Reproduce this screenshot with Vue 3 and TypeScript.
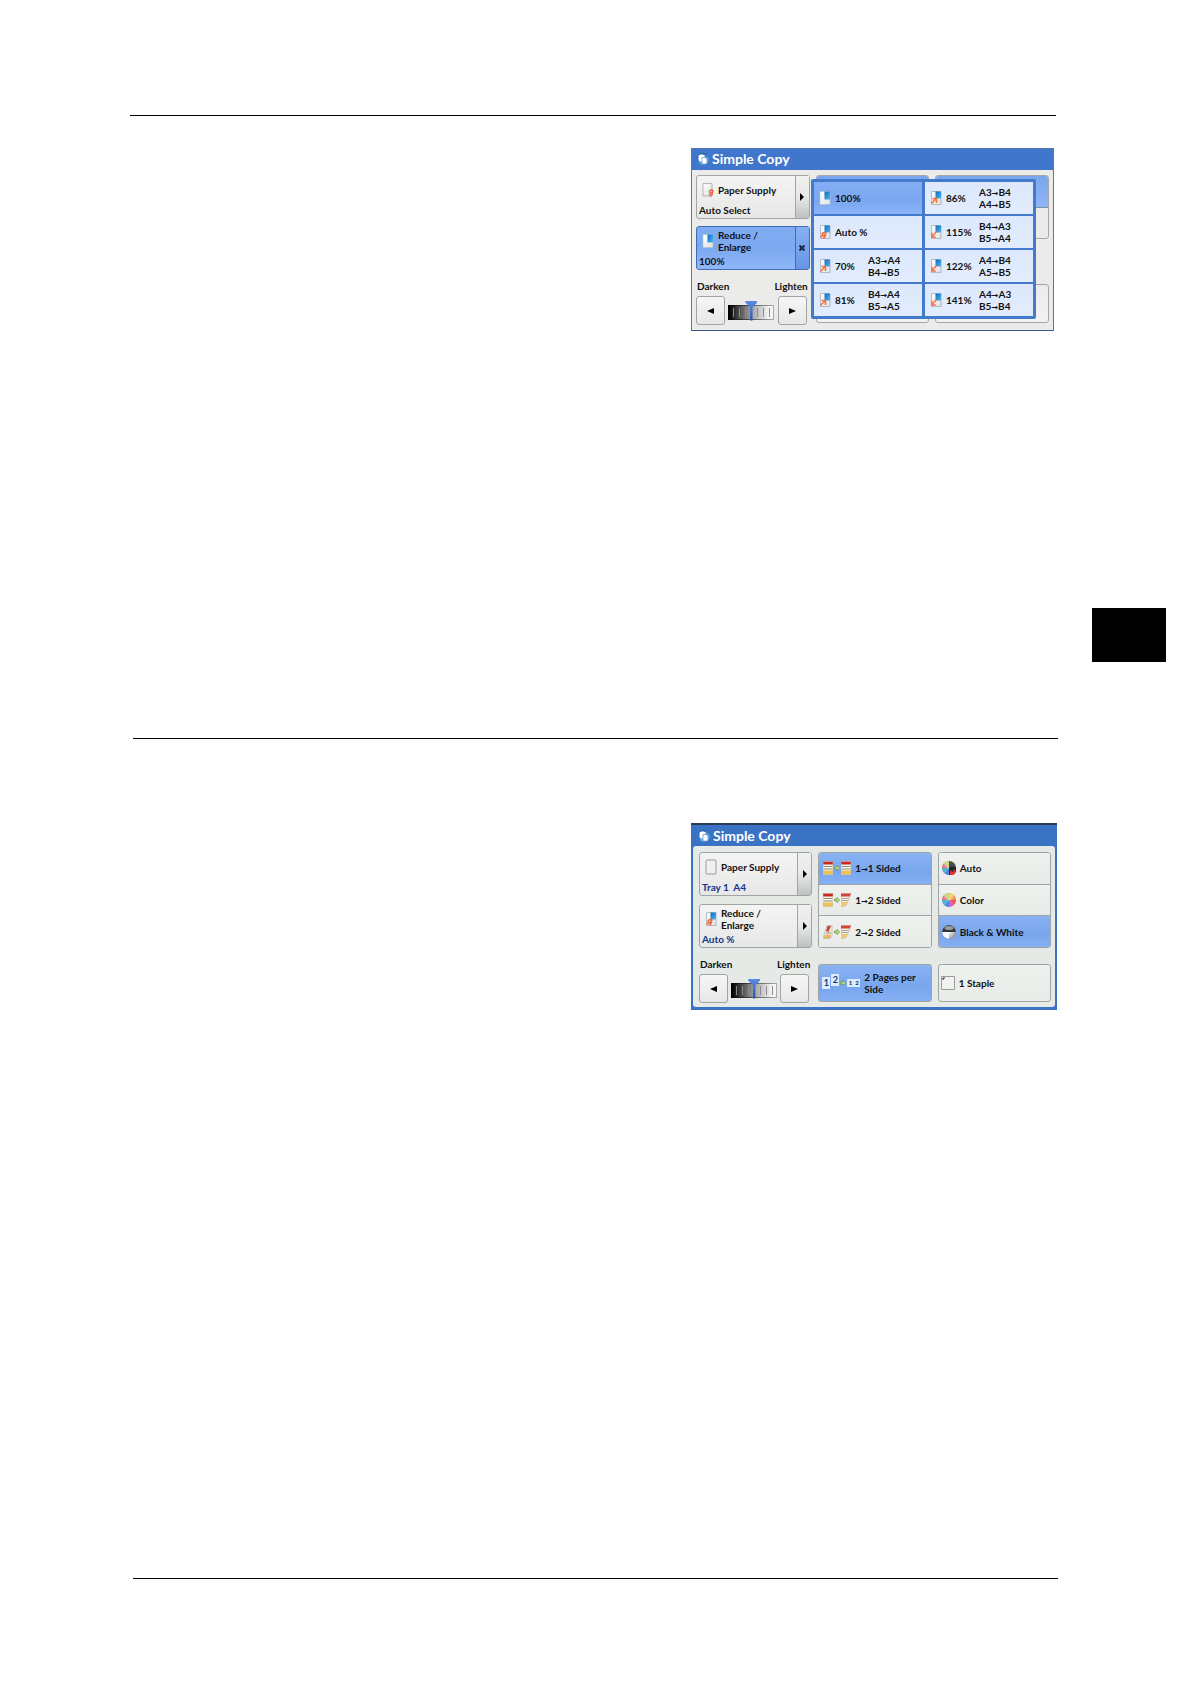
<script setup lang="ts">
import { ref } from 'vue'

interface Ratio {
  label: string
  icon: string
  pairs: [string, string][]
}

const ratios: Ratio[] = [
  { label: '100%', icon: 'full', pairs: [] },
  { label: 'Auto %', icon: 'fit', pairs: [] },
  { label: '70%', icon: 'reduce', pairs: [['A3', 'A4'], ['B4', 'B5']] },
  { label: '81%', icon: 'reduce', pairs: [['B4', 'A4'], ['B5', 'A5']] },
  { label: '86%', icon: 'reduce', pairs: [['A3', 'B4'], ['A4', 'B5']] },
  { label: '115%', icon: 'enlarge', pairs: [['B4', 'A3'], ['B5', 'A4']] },
  { label: '122%', icon: 'enlarge', pairs: [['A4', 'B4'], ['A5', 'B5']] },
  { label: '141%', icon: 'enlarge', pairs: [['A4', 'A3'], ['B5', 'B4']] },
]

const sides = [
  { from: '1', to: '1 Sided', left: 'sheet', right: 'sheet' },
  { from: '1', to: '2 Sided', left: 'sheet', right: 'turned' },
  { from: '2', to: '2 Sided', left: 'flipped', right: 'turned' },
]

const colors = [
  { label: 'Auto', icon: 'wheel-auto' },
  { label: 'Color', icon: 'wheel' },
  { label: 'Black & White', icon: 'mono' },
]

const ratio = ref('100%')
const side = ref(0)
const color = ref('Black & White')
const densityA = ref(50)
const densityB = ref(50)
</script>

<template>
  <main class="page">
    <svg class="defs" width="0" height="0" aria-hidden="true">
      <defs>
        <linearGradient id="blue" x1="0" y1="0" x2="1" y2="1">
          <stop offset="0" stop-color="#0a6cc0" />
          <stop offset="1" stop-color="#4fb4f0" />
        </linearGradient>
        <linearGradient id="paper" x1="0" y1="0" x2="1" y2="1">
          <stop offset="0" stop-color="#ffffff" />
          <stop offset="1" stop-color="#dfe0e0" />
        </linearGradient>
        <radialGradient id="globe" cx="0.6" cy="0.7" r="0.7">
          <stop offset="0" stop-color="#a4dcf8" />
          <stop offset="0.5" stop-color="#5ca8e0" />
          <stop offset="1" stop-color="#1c5298" />
        </radialGradient>
        <linearGradient id="gray" x1="0" y1="0" x2="1" y2="1">
          <stop offset="0" stop-color="#f4f4f4" />
          <stop offset="1" stop-color="#777" />
        </linearGradient>
        <symbol id="logo" viewBox="0 0 12 12">
          <circle cx="6" cy="6" r="6" fill="url(#globe)" />
          <path d="M1.500 2.500 4 1.200 7.500 2v6.500H3L1.500 7z" fill="#fff" />
          <path d="M5 4.500h3.500L10 6v5H5z" fill="#fff" stroke="#3a7cc4" stroke-width=".6" />
        </symbol>
        <symbol id="query" viewBox="0 0 12 16">
          <path d="M1 1.500h8q1 0 1 1V14H1z" fill="url(#paper)" stroke="#a4a4a4" stroke-width=".8" />
          <path d="M7.500 9q2-1.800 3.500-.5Q11 10.500 8.500 11q-1.500-.4-1-2M10.800 8.500Q11 12 8.500 14.800M6.500 13l2-.8" fill="none" stroke="#e8603c" stroke-width="1.300" />
        </symbol>
        <symbol id="blank" viewBox="0 0 12 16">
          <rect x="1" y="1" width="10" height="14" rx="1" fill="#eef0ee" stroke="#9a9c9a" />
        </symbol>
        <symbol id="full" viewBox="0 0 12 16">
          <path d="M1 1.500h10v13H1z" fill="url(#paper)" stroke="#b4bcc8" stroke-width=".5" />
          <path d="M5.500 1.500H11v8H5.500z" fill="url(#blue)" />
        </symbol>
        <symbol id="fit" viewBox="0 0 12 16">
          <path d="M1.500 1.500h9.500v13H1.500z" fill="url(#paper)" stroke="#8f98a4" stroke-width=".6" />
          <path d="M5.500 1.500H11v7H5.500z" fill="url(#blue)" />
          <path d="M1.500 13.500 4 11.500M3 11q0-2.500 2.500-2.500T6 11q-2 1-3 0M6.500 8Q7 12 4.500 14.500" fill="none" stroke="#f06a3a" stroke-width="1.500" />
        </symbol>
        <symbol id="reduce" viewBox="0 0 12 16">
          <path d="M1.500 1.500h9.500v13H1.500z" fill="url(#paper)" stroke="#8f98a4" stroke-width=".6" />
          <path d="M5.500 1.500H11v7H5.500z" fill="url(#blue)" />
          <path d="M1.500 13.500 6 8.800M2.500 8.500h4v4.500" fill="none" stroke="#f4703e" stroke-width="1.500" />
        </symbol>
        <symbol id="enlarge" viewBox="0 0 12 16">
          <path d="M1.500 1.500h9.500v13H1.500z" fill="url(#paper)" stroke="#8f98a4" stroke-width=".6" />
          <path d="M5.500 1.500H11v7H5.500z" fill="url(#blue)" />
          <path d="M6.500 7.500 2 12.500M1.800 8.500V13h4" fill="none" stroke="#f4703e" stroke-width="1.400" />
        </symbol>
        <symbol id="sheet" viewBox="0 0 10 14">
          <path d="M0 0h10v14H0z" fill="#faf7ec" />
          <path d="M0 .5h10v3H0z" fill="#c82a22" />
          <path d="M1 5.500h8M1 8h8" stroke="#8c8c80" stroke-width="1" />
          <path d="M.5 9.500h9v4h-9z" fill="#f0c050" />
          <path d="M.3.3h9.400v13.400H.3z" fill="none" stroke="#a89c90" stroke-width=".5" />
        </symbol>
        <symbol id="turned" viewBox="0 0 10 14">
          <path d="M0 0h10L5.500 12 1 14z" fill="#f6f0dc" stroke="#a09888" stroke-width=".5" />
          <path d="M0 .5h9.800l-1 3H0z" fill="#d0443a" />
          <path d="M1 5.500h6.500M1 7.500h5.500" stroke="#908c80" stroke-width=".8" />
          <path d="M1 9h5.200l-1.400 3.500L1 13.500z" fill="#f0c870" />
        </symbol>
        <symbol id="flipped" viewBox="0 0 10 14">
          <path d="M4 .5h5v10l-2 3H0z" fill="#f4efe2" stroke="#a09888" stroke-width=".5" />
          <path d="M4.500 1h3.500L5.500 7 3 6z" fill="#d0443a" />
          <path d="M3 8h5" stroke="#85827a" stroke-width=".9" />
          <path d="M2 9.800h6.500l-2 3.500H.5z" fill="#e8b860" />
        </symbol>
        <symbol id="step" viewBox="0 0 6 6">
          <path d="M.5 2H3V.5L5.700 3 3 5.500V4H.5z" fill="#c4e08a" stroke="#6c9c3c" stroke-width=".8" />
        </symbol>
        <symbol id="wheel" viewBox="0 0 14 14">
          <path d="M7 7V0a7 7 0 0 1 5 2z" fill="#f4c02c" />
          <path d="M7 7 12 2a7 7 0 0 1 2 5z" fill="#f08838" />
          <path d="M7 7h7a7 7 0 0 1-2 5z" fill="#e85858" />
          <path d="M7 7l5 5a7 7 0 0 1-5 2z" fill="#d860b8" />
          <path d="M7 7v7a7 7 0 0 1-5-2z" fill="#5a80e0" />
          <path d="M7 7l-5 5a7 7 0 0 1-2-5z" fill="#48b8d0" />
          <path d="M7 7H0a7 7 0 0 1 2-5z" fill="#e86474" />
          <path d="M7 7 2 2a7 7 0 0 1 5-2z" fill="#a8cc48" />
          <ellipse cx="7" cy="4" rx="5.500" ry="3.500" fill="#fff" opacity=".3" />
        </symbol>
        <symbol id="wheel-auto" viewBox="0 0 14 14">
          <use href="#wheel" width="14" height="14" />
          <path d="M7 0a7 7 0 0 1 7 7l-.6 3-6.400-3z" fill="#4a4a4c" />
          <path d="M7 6h7v5q-3 3.500-7 3z" fill="#222" />
          <path d="M8 13.500q-1-2.500 1.500-4.500 0 2 1 2 1.500-.5 1-3.500 3 2.500 1.500 5-2 2.500-5 1" fill="#e03838" />
        </symbol>
        <symbol id="mono" viewBox="0 0 14 14">
          <circle cx="7" cy="7" r="6.800" fill="#606468" />
          <path d="M7 7h6.800A6.800 6.800 0 0 1 7 13.800z" fill="url(#gray)" />
          <path d="M7 7H.2A6.800 6.800 0 0 0 7 13.800z" fill="#fbfbfb" />
          <path d="M.2 7A6.800 6.800 0 0 1 13.800 7z" fill="#34373a" />
          <ellipse cx="7" cy="3" rx="4.500" ry="2" fill="#fff" opacity=".5" />
        </symbol>
        <symbol id="staple" viewBox="0 0 14 14">
          <path d="M.5.5h13v13H.5z" fill="#f1f3f0" stroke="#9a9c9a" />
          <path d="M1.500 3.500l2-2" stroke="#333" stroke-width="1.200" />
        </symbol>
      </defs>
    </svg>

    <hr class="rule top" />

    <section class="panel first" aria-label="Simple Copy, Reduce / Enlarge list open">
      <header class="title">
        <svg class="logo"><use href="#logo" /></svg>
        <h2>Simple Copy</h2>
      </header>
      <div class="body">
        <div class="column">
          <div class="split">
            <button class="main">
              <span class="head"><svg class="i"><use href="#query" /></svg><span>Paper Supply</span></span>
              <span class="value">Auto Select</span>
            </button>
            <button class="more" aria-label="Paper Supply options"><svg class="caret" viewBox="0 0 4 8"><path d="M0 0l4 4-4 4z" /></svg></button>
          </div>
          <div class="split on">
            <button class="main">
              <span class="head"><svg class="i"><use href="#full" /></svg><span>Reduce /<br />Enlarge</span></span>
              <span class="value">{{ ratio }}</span>
            </button>
            <button class="more" aria-label="Close Reduce / Enlarge"><svg class="cross" viewBox="0 0 6 6"><path d="M.5.5l5 5M5.500.5l-5 5" /></svg></button>
          </div>
          <div class="density">
            <div class="ends"><label for="density-a">Darken</label><span>Lighten</span></div>
            <div class="control">
              <button class="nudge" aria-label="Darker"><svg viewBox="0 0 7 6"><path d="M7 0v6L0 3z" /></svg></button>
              <input id="density-a" v-model.number="densityA" type="range" />
              <button class="nudge" aria-label="Lighter"><svg viewBox="0 0 7 6"><path d="M0 0v6l7-3z" /></svg></button>
            </div>
          </div>
        </div>
        <div class="column">
          <div class="slot"><i class="lit"></i><i></i></div>
          <div class="slot low"></div>
        </div>
        <div class="column">
          <div class="slot short"><i class="lit"></i><i></i></div>
          <div class="slot low"></div>
        </div>

        <div class="popup">
          <button
            v-for="r in ratios"
            :key="r.label"
            :class="{ on: r.label === ratio }"
            @click="ratio = r.label"
          >
            <svg class="i"><use :href="'#' + r.icon" /></svg>
            <span class="percent">{{ r.label }}</span>
            <span v-if="r.pairs.length" class="pairs">
              <span v-for="p in r.pairs" :key="p[0]">{{ p[0] }}<span class="to">→</span>{{ p[1] }}</span>
            </span>
          </button>
        </div>
      </div>
    </section>

    <div class="tab"></div>

    <hr class="rule" />

    <section class="panel second" aria-label="Simple Copy">
      <header class="title">
        <svg class="logo"><use href="#logo" /></svg>
        <h2>Simple Copy</h2>
      </header>
      <div class="body">
        <div class="column">
          <div class="split">
            <button class="main">
              <span class="head"><svg class="i"><use href="#blank" /></svg><span>Paper Supply</span></span>
              <span class="value">Tray 1&nbsp; A4</span>
            </button>
            <button class="more" aria-label="Paper Supply options"><svg class="caret" viewBox="0 0 4 8"><path d="M0 0l4 4-4 4z" /></svg></button>
          </div>
          <div class="split">
            <button class="main">
              <span class="head"><svg class="i"><use href="#fit" /></svg><span>Reduce /<br />Enlarge</span></span>
              <span class="value">Auto %</span>
            </button>
            <button class="more" aria-label="Reduce / Enlarge options"><svg class="caret" viewBox="0 0 4 8"><path d="M0 0l4 4-4 4z" /></svg></button>
          </div>
          <div class="density">
            <div class="ends"><label for="density-b">Darken</label><span>Lighten</span></div>
            <div class="control">
              <button class="nudge" aria-label="Darker"><svg viewBox="0 0 7 6"><path d="M7 0v6L0 3z" /></svg></button>
              <input id="density-b" v-model.number="densityB" type="range" />
              <button class="nudge" aria-label="Lighter"><svg viewBox="0 0 7 6"><path d="M0 0v6l7-3z" /></svg></button>
            </div>
          </div>
        </div>

        <div class="column">
          <div class="group">
            <button v-for="(s, n) in sides" :key="n" :class="{ on: n === side }" @click="side = n">
              <span class="flow">
                <svg class="doc"><use :href="'#' + s.left" /></svg>
                <svg class="step"><use href="#step" /></svg>
                <svg class="doc"><use :href="'#' + s.right" /></svg>
              </span>
              <span>{{ s.from }}<span class="to">→</span>{{ s.to }}</span>
            </button>
          </div>
          <button class="low on">
            <span class="nup">
              <span class="leaf">1</span><span class="leaf raised">2</span>
              <svg class="step"><use href="#step" /></svg>
              <span class="spread"><b>1</b><b>2</b></span>
            </span>
            <span>2 Pages per<br />Side</span>
          </button>
        </div>

        <div class="column">
          <div class="group">
            <button
              v-for="c in colors"
              :key="c.label"
              :class="{ on: c.label === color }"
              @click="color = c.label"
            >
              <svg class="round"><use :href="'#' + c.icon" /></svg>
              <span>{{ c.label }}</span>
            </button>
          </div>
          <button class="low">
            <svg class="round"><use href="#staple" /></svg>
            <span>1 Staple</span>
          </button>
        </div>
      </div>
    </section>

    <hr class="rule foot" />
  </main>
</template>

<style>
body {
  margin: 0;
  background: #fff;
}
</style>

<style scoped>
* {
  box-sizing: border-box;
}
.page {
  display: flex;
  flex-direction: column;
  padding: 115px 24px 105px 133px;
  font: bold 10px/12px Lato, "Noto Sans", sans-serif;
  color: #111;
}
.defs {
  position: absolute;
}
svg {
  display: block;
  flex: none;
}
.rule {
  align-self: stretch;
  height: 1px;
  margin: 0 108px 0 0;
  border: 0;
  background: #000;
}
.rule.top {
  margin: 0 110px 0 -3px;
}
.rule.foot {
  margin-top: 568px;
}
.tab {
  align-self: flex-end;
  width: 74px;
  height: 54px;
  margin: 277px 0 76px;
  background: #000;
}
.panel {
  align-self: flex-end;
  background: #4076cc;
}
.first {
  width: 363px;
  margin: 32px 112px 0 0;
  border: 1px solid #5577a8;
  border-bottom-color: #3c5a8c;
}
.second {
  width: 366px;
  margin: 84px 109px 0 0;
  padding: 0 2px 3px;
  border-top: 2px solid #2c3a58;
  background: #3b73c4;
}
.title {
  display: flex;
  align-items: center;
  gap: 3px;
  height: 21px;
  padding: 0 5px 2px;
  color: #fff;
}
.second .title {
  padding-bottom: 0;
}
.logo {
  width: 12px;
  height: 12px;
}
.title h2 {
  margin: 0;
  font-size: 14px;
  line-height: 18px;
}
.body {
  position: relative;
  display: grid;
  grid-template-columns: repeat(3, 1fr);
  gap: 6px;
  padding: 5px 4px;
  background: #ebebe9;
}
.second .body {
  padding: 6px 4px 4px 6px;
  border-radius: 3px;
  background: #e6eae6;
}
.column {
  display: flex;
  flex-direction: column;
  min-width: 0;
}
button {
  margin: 0;
  padding: 0;
  border: 0;
  background: none;
  color: inherit;
  font: inherit;
  text-align: left;
}
.split {
  display: flex;
  height: 44px;
  margin-bottom: 7px;
  border: 1px solid #a2a4a4;
  border-radius: 3px;
  background: linear-gradient(#f4f4f3, #e6e7e6);
}
.second .split {
  margin-bottom: 8px;
}
.main {
  flex: 1;
  display: flex;
  flex-direction: column;
}
.head {
  display: flex;
  align-items: center;
  gap: 4px;
  height: 28px;
  padding-left: 5px;
}
.i {
  width: 12px;
  height: 16px;
}
.value {
  padding-left: 2px;
}
.second .value {
  color: #14348c;
}
.more {
  display: flex;
  align-items: center;
  justify-content: center;
  width: 14px;
  border-left: 1px solid #a2a4a4;
  background: linear-gradient(#f0f0ef, #e8e8e8 50%, #bfc1c1);
}
.caret {
  width: 4px;
  height: 8px;
}
.cross {
  width: 6px;
  height: 6px;
  fill: none;
  stroke: #16284c;
  stroke-width: 2;
}
.on {
  background: linear-gradient(#7fabf2, #7ba8f0 50%, #8fb7f8);
}
.split.on {
  border-color: #3f6cb8;
}
.on .more {
  border-color: #3f6cb8;
  background: linear-gradient(#86b0f4, #6695e4);
}
.density {
  display: flex;
  flex-direction: column;
  gap: 4px;
}
.ends {
  display: flex;
  justify-content: space-between;
  padding: 3px 2px 0 1px;
}
.second .ends {
  padding-top: 2px;
}
.control {
  display: flex;
  align-items: center;
  justify-content: space-between;
  padding-right: 3px;
}
.nudge {
  display: flex;
  align-items: center;
  justify-content: center;
  width: 29px;
  height: 29px;
  border: 1px solid #a2a4a4;
  border-radius: 3px;
  background: linear-gradient(#f6f6f5, #e6e7e6);
}
.nudge svg {
  width: 7px;
  height: 6px;
}
input[type="range"] {
  appearance: none;
  width: 46px;
  height: 24px;
  margin: 0;
  background:
    repeating-linear-gradient(90deg, transparent 0 5px, #8c8c8c 5px 6px) 0 9px / 42px 9px no-repeat,
    linear-gradient(90deg, #000, #333 15%, #a0a0a0 50%, #f4f4f4 90%) 1px 7px / 44px 13px no-repeat,
    linear-gradient(90deg, #000, #aaa) 0 6px / 100% 15px no-repeat;
}
input[type="range"]::-webkit-slider-thumb {
  appearance: none;
  width: 12px;
  height: 20px;
  background: linear-gradient(#5c8ce0, #2456b0);
  clip-path: polygon(0 0, 100% 0, 100% 10%, 60% 34%, 60% 100%, 40% 100%, 40% 34%, 0 10%);
}
.slot {
  display: flex;
  flex-direction: column;
  height: 96px;
  border: 1px solid #a6a8a8;
  border-radius: 3px;
  overflow: hidden;
}
.slot i {
  flex: 1;
}
.slot .lit {
  background: linear-gradient(#7aa6ee, #8fb6f6);
  border-bottom: 1px solid #8090a8;
}
.slot.short {
  height: 64px;
}
.slot.low {
  height: 39px;
  margin-top: auto;
  margin-bottom: 2px;
  background: linear-gradient(#ebebeb, #f2f2f2);
}
.popup {
  position: absolute;
  top: 9px;
  left: 119px;
  display: grid;
  grid-auto-flow: column;
  grid-template: repeat(4, 32px) / 108px 108px;
  gap: 2px 3px;
  padding: 3px;
  border-radius: 2px;
  background: #447acc;
}
.popup button {
  display: flex;
  align-items: center;
  padding-left: 5px;
  background: linear-gradient(#dde8fc, #e2ecfd);
  white-space: nowrap;
}
.popup .on {
  background: linear-gradient(#83aef4, #7aa7f0 60%, #8cb4f8);
}
.percent {
  width: 37px;
  padding-left: 4px;
}
.pairs {
  display: flex;
  flex-direction: column;
}
.to {
  font: bold 8px/8px "DejaVu Sans", sans-serif;
}
.group {
  display: flex;
  flex-direction: column;
  height: 96px;
  border: 1px solid #a0a4a4;
  border-radius: 3px;
  overflow: hidden;
}
.group button {
  flex: 1;
  display: flex;
  align-items: center;
  gap: 4px;
  padding-left: 3px;
  background: linear-gradient(#eff1ee, #e8ebe7);
}
.group button + button {
  border-top: 1px solid #a0a4a4;
}
.group .on,
button.low.on {
  background: linear-gradient(#8ab3f5, #78a5ec 60%, #86b0f4);
}
button.low {
  display: flex;
  align-items: center;
  gap: 4px;
  height: 38px;
  margin-top: 16px;
  padding-left: 2px;
  border: 1px solid #a0a4a4;
  border-radius: 3px;
  background: linear-gradient(#eff1ee, #e8ebe7);
}
.round {
  width: 14px;
  height: 14px;
}
.flow,
.nup {
  display: flex;
  align-items: center;
  gap: 1px;
}
.flow {
  padding-left: 1px;
}
.doc {
  width: 10px;
  height: 14px;
}
.step {
  width: 6px;
  height: 6px;
}
.nup {
  padding-left: 1px;
  color: #123c80;
}
.leaf {
  width: 8px;
  height: 12px;
  background: #dcecfc;
  font-size: 9px;
  text-align: center;
}
.leaf.raised {
  margin-bottom: 6px;
}
.spread {
  display: flex;
  justify-content: space-around;
  width: 13px;
  height: 8px;
  background: #dcecfc;
  font-size: 6px;
  line-height: 8px;
}
</style>
